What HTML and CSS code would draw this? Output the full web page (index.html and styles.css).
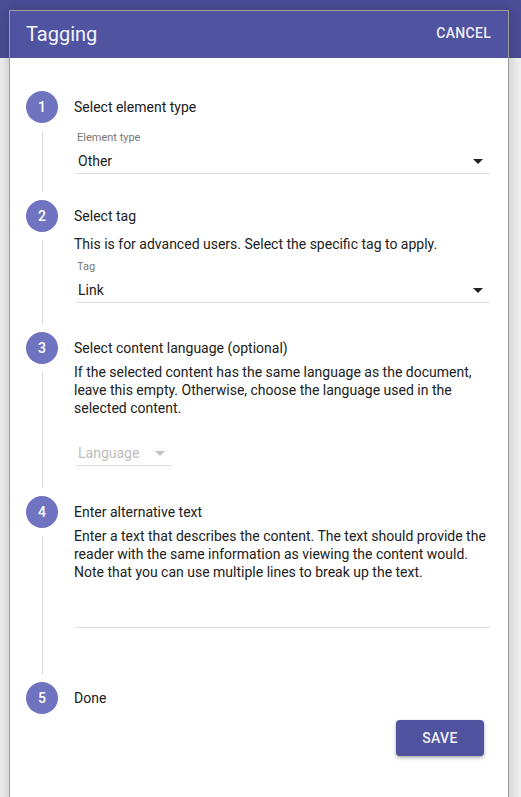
FILE: index.html
```html
<!DOCTYPE html>
<html lang="en">
<head>
<meta charset="utf-8">
<title>Tagging</title>
<link rel="stylesheet" href="styles.css">
</head>
<body>
<div class="dialog">
  <header class="dialog-header">
    <h1 class="dialog-title">Tagging</h1>
    <button class="text-button">CANCEL</button>
  </header>
  <div class="stepper">
    <div class="step step-1">
      <div class="rail"><div class="circle">1</div><div class="connector"></div></div>
      <div class="step-body">
        <div class="step-title">Select element type</div>
        <div class="field">
          <div class="field-label">Element type</div>
          <div class="select"><span>Other</span><svg class="arrow" viewBox="0 0 10 5" width="10" height="5"><path d="M0 0h10L5 5z"/></svg></div>
        </div>
      </div>
    </div>
    <div class="step step-2">
      <div class="rail"><div class="circle">2</div><div class="connector"></div></div>
      <div class="step-body">
        <div class="step-title">Select tag</div>
        <p class="step-desc desc-tight">This is for advanced users. Select the specific tag to apply.</p>
        <div class="field field-tag">
          <div class="field-label">Tag</div>
          <div class="select"><span>Link</span><svg class="arrow" viewBox="0 0 10 5" width="10" height="5"><path d="M0 0h10L5 5z"/></svg></div>
        </div>
      </div>
    </div>
    <div class="step step-3">
      <div class="rail"><div class="circle">3</div><div class="connector"></div></div>
      <div class="step-body">
        <div class="step-title">Select content language (optional)</div>
        <p class="step-desc">If the selected content has the same language as the document, leave this empty. Otherwise, choose the language used in the selected content.</p>
        <div class="select select-small disabled"><span>Language</span><svg class="arrow" viewBox="0 0 10 5" width="10" height="5"><path d="M0 0h10L5 5z"/></svg></div>
      </div>
    </div>
    <div class="step step-4">
      <div class="rail"><div class="circle">4</div><div class="connector"></div></div>
      <div class="step-body">
        <div class="step-title">Enter alternative text</div>
        <p class="step-desc">Enter a text that describes the content. The text should provide the reader with the same information as viewing the content would. Note that you can use multiple lines to break up the text.</p>
        <div class="textarea"></div>
      </div>
    </div>
    <div class="step step-5">
      <div class="rail"><div class="circle">5</div></div>
      <div class="step-body">
        <div class="step-title">Done</div>
      </div>
    </div>
  </div>
  <div class="actions">
    <button class="save-button">SAVE</button>
  </div>
</div>
</body>
</html>
```
FILE: styles.css
```css
html, body {
  margin: 0;
  padding: 0;
  height: 100%;
  overflow: hidden;
}
body {
  font-family: Roboto, "Noto Sans", "Liberation Sans", sans-serif;
  background: linear-gradient(to bottom, #4b4e97 0, #4b4e97 58px, #f1f1f1 58px, #f1f1f1 100%);
  color: #212121;
}
.dialog {
  box-sizing: border-box;
  width: 500px;
  height: 820px;
  margin: 10px 0 0 9px;
  border: 1px solid #9c9c9c;
  background: #fff;
  box-shadow: 0 0 14px rgba(0, 0, 0, 0.22);
  display: flex;
  flex-direction: column;
}
.dialog-header {
  height: 47px;
  flex: none;
  background: #50539f;
  display: flex;
  align-items: center;
  justify-content: space-between;
  padding: 0 17px 0 16px;
}
.dialog-title {
  margin: 0;
  font-size: 20px;
  font-weight: 400;
  color: #f4f4fb;
  line-height: 24px;
  padding-bottom: 1px;
}
.text-button {
  border: 0;
  background: none;
  padding: 0;
  font-family: inherit;
  font-size: 14px;
  font-weight: 500;
  letter-spacing: 0.3px;
  color: #ececf6;
  margin-bottom: 3px;
}
.stepper {
  padding: 33px 18px 0 16px;
  display: flex;
  flex-direction: column;
}
.step {
  display: flex;
  gap: 16px;
}
.rail {
  width: 32px;
  flex: none;
  display: flex;
  flex-direction: column;
  align-items: center;
}
.circle {
  width: 32px;
  height: 32px;
  border-radius: 50%;
  background: #7073c0;
  color: #fff;
  font-size: 14px;
  font-weight: 500;
  line-height: 32px;
  text-align: center;
  flex: none;
}
.connector {
  flex: 1;
  width: 1px;
  background: #d8d8d8;
  margin: 8px 0;
}
.step-body {
  flex: 1;
  min-width: 0;
}
.step-1 .step-body { padding-bottom: 26px; }
.step-2 .step-body { padding-bottom: 29px; }
.step-3 .step-body { padding-bottom: 30px; }
.step-4 .step-body { padding-bottom: 54px; }
.step-title {
  height: 32px;
  line-height: 32px;
  font-size: 14px;
  color: #212121;
}
.step-desc {
  margin: -1px 0 0;
  font-size: 14px;
  line-height: 18px;
  color: #212121;
}
.step-desc.desc-tight {
  margin-top: 3px;
}
.field {
  margin: 8px 0 0 2px;
}
.field-tag {
  margin-top: 7px;
}
.field-label {
  font-size: 11px;
  line-height: 13px;
  color: #777;
  padding-left: 1px;
}
.select {
  display: flex;
  align-items: center;
  justify-content: space-between;
  padding: 7px 7px 2px 2px;
  line-height: 20px;
  font-size: 14px;
  color: #212121;
  border-bottom: 1px solid #dcdcdc;
}
.arrow {
  fill: #222;
  display: block;
}
.select-small {
  width: 96px;
  box-sizing: border-box;
  margin: 19px 0 0 2px;
}
.select.disabled {
  color: #bdbdbd;
}
.select.disabled .arrow {
  fill: #c4c4c4;
}
.textarea {
  margin: 0 0 0 2px;
  height: 46px;
  border-bottom: 1px solid #dcdcdc;
}
.actions {
  display: flex;
  justify-content: flex-end;
  padding: 6px 24px 0 0;
}
.save-button {
  width: 88px;
  height: 36px;
  border: 0;
  border-radius: 4px;
  background: #50539f;
  color: #f2f2fa;
  font-family: inherit;
  font-size: 14px;
  font-weight: 500;
  letter-spacing: 0.4px;
  box-shadow: 0 2px 4px rgba(0, 0, 0, 0.25), 0 1px 2px rgba(0, 0, 0, 0.15);
}
```
